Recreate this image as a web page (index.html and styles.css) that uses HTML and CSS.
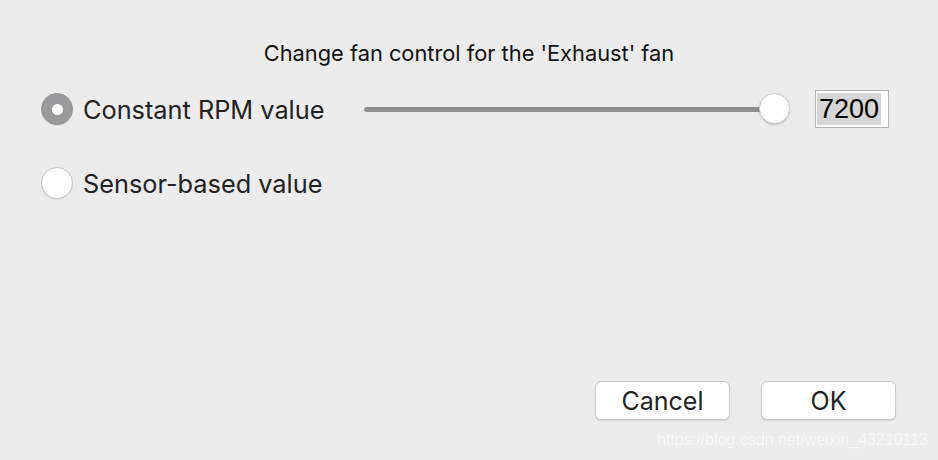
FILE: index.html
```html
<!DOCTYPE html>
<html>
<head>
<meta charset="utf-8">
<link rel="stylesheet" href="styles.css">
</head>
<body>
<div class="dialog">
  <div class="title">Change fan control for the 'Exhaust' fan</div>
  <div class="options">
    <div class="row">
      <span class="radio radio-on"><span class="dot"></span></span>
      <span class="label">Constant RPM value</span>
      <div class="slider">
        <div class="track"></div>
        <div class="thumb"></div>
      </div>
      <div class="field"><span class="sel">7200</span></div>
    </div>
    <div class="row">
      <span class="radio"></span>
      <span class="label">Sensor-based value</span>
    </div>
  </div>
  <div class="actions">
    <button class="btn">Cancel</button>
    <button class="btn">OK</button>
  </div>
  <div class="watermark">https://blog.csdn.net/weixin_43210113</div>
</div>
</body>
</html>
```
FILE: styles.css
```css
html, body {
  margin: 0;
  padding: 0;
  background: #ececec;
}
.dialog {
  position: relative;
  width: 938px;
  height: 460px;
  box-sizing: border-box;
  padding-top: 41px;
  display: flex;
  flex-direction: column;
  font-family: Inter, "Liberation Sans", sans-serif;
  color: #1f1f1f;
}
.title {
  height: 24px;
  line-height: 24px;
  text-align: center;
  font-size: 21.8px;
  color: #111;
}
.options {
  margin-top: 24px;
  display: flex;
  flex-direction: column;
  gap: 34px;
}
.row {
  display: flex;
  align-items: center;
  height: 40px;
  padding-left: 41px;
}
.radio {
  width: 32px;
  height: 32px;
  box-sizing: border-box;
  border-radius: 50%;
  background: #fff;
  border: 1px solid #c4c4c4;
  box-shadow: 0 1px 1px rgba(0,0,0,0.08);
  display: flex;
  align-items: center;
  justify-content: center;
  flex: none;
}
.radio-on {
  background: #9a9a9c;
  border-color: #939395;
}
.dot {
  width: 11px;
  height: 11px;
  border-radius: 50%;
  background: #fff;
}
.label {
  margin-left: 10px;
  width: 281px;
  font-size: 25.3px;
  color: #222;
  flex: none;
}
.slider {
  position: relative;
  width: 426px;
  height: 32px;
  display: flex;
  align-items: center;
  flex: none;
}
.track {
  width: 411px;
  height: 5px;
  border-radius: 3px;
  background: #8e8e91;
}
.thumb {
  position: absolute;
  right: 0;
  top: 0;
  width: 31px;
  height: 31px;
  box-sizing: border-box;
  border-radius: 50%;
  background: #fff;
  border: 1px solid #cdcdcd;
  box-shadow: 0 1px 2px rgba(0,0,0,0.18);
}
.field {
  margin-left: 25px;
  width: 74px;
  height: 38px;
  box-sizing: border-box;
  border: 1px solid #b3b3b3;
  background: #fff;
  padding: 2px 0 0 1px;
  flex: none;
}
.sel {
  display: inline-block;
  height: 32px;
  line-height: 32px;
  padding: 0 2px;
  background: #d6d6d6;
  font-family: "Liberation Sans", Arial, sans-serif;
  font-size: 27px;
  color: #000;
}
.actions {
  margin-top: auto;
  display: flex;
  justify-content: flex-end;
  gap: 31px;
  padding: 0 42px 40px 0;
}
.btn {
  width: 135px;
  height: 39px;
  box-sizing: border-box;
  border-radius: 6px;
  border: 1px solid #cbcbcb;
  background: #fff;
  box-shadow: 0 1px 1px rgba(0,0,0,0.12);
  font-family: Inter, "Liberation Sans", sans-serif;
  font-size: 25px;
  color: #222;
  padding: 0;
}
.watermark {
  position: absolute;
  right: 10px;
  bottom: 11px;
  font-family: "Liberation Sans", Arial, sans-serif;
  font-size: 16px;
  color: #f8f8f8;
  text-shadow: 0 0 1px rgba(0,0,0,0.06);
}
```
